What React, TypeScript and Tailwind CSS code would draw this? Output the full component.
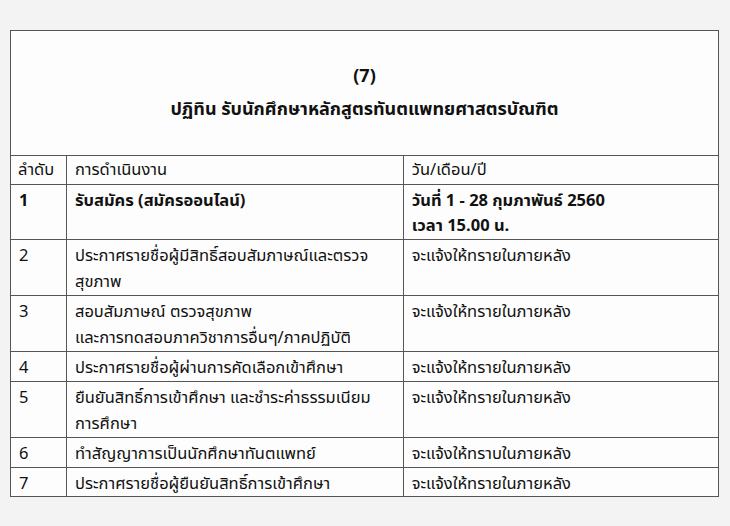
const rows: { no: string; task: string[]; date: string[]; bold?: boolean }[] = [
  { no: "1", task: ["รับสมัคร (สมัครออนไลน์)"], date: ["วันที่ 1 - 28 กุมภาพันธ์ 2560", "เวลา 15.00 น."], bold: true },
  { no: "2", task: ["ประกาศรายชื่อผู้มีสิทธิ์สอบสัมภาษณ์และตรวจ", "สุขภาพ"], date: ["จะแจ้งให้ทรายในภายหลัง"] },
  { no: "3", task: ["สอบสัมภาษณ์ ตรวจสุขภาพ", "และการทดสอบภาควิชาการอื่นๆ/ภาคปฏิบัติ"], date: ["จะแจ้งให้ทรายในภายหลัง"] },
  { no: "4", task: ["ประกาศรายชื่อผู้ผ่านการคัดเลือกเข้าศึกษา"], date: ["จะแจ้งให้ทรายในภายหลัง"] },
  { no: "5", task: ["ยืนยันสิทธิ์การเข้าศึกษา และชำระค่าธรรมเนียม", "การศึกษา"], date: ["จะแจ้งให้ทรายในภายหลัง"] },
  { no: "6", task: ["ทำสัญญาการเป็นนักศึกษาทันตแพทย์"], date: ["จะแจ้งให้ทราบในภายหลัง"] },
  { no: "7", task: ["ประกาศรายชื่อผู้ยืนยันสิทธิ์การเข้าศึกษา"], date: ["จะแจ้งให้ทรายในภายหลัง"] },
];

const font = {
  fontFamily: '"Noto Sans Thai", "Noto Sans", "DejaVu Sans", sans-serif',
};

const cell = "border border-[#555] align-top pt-[3px]";
const head = "border border-[#555] align-top leading-[27.5px]";

export default function App() {
  return (
    <div className="min-h-[526px] bg-[#f3f3f3] pt-[30px] pl-[10px] pr-[11px]" style={font}>
      <table className="w-[709px] border-collapse bg-[#fdfdfd] text-[16.5px] leading-[25.9px] text-[#111]">
        <colgroup>
          <col className="w-[56px]" />
          <col className="w-[337px]" />
          <col className="w-[316px]" />
        </colgroup>
        <tbody>
          <tr>
            <td
              colSpan={3}
              className="h-[125px] border border-[#555] text-center align-middle text-[18px] font-bold leading-[33px]"
            >
              (7)
              <br />
              ปฏิทิน รับนักศึกษาหลักสูตรทันตแพทยศาสตรบัณฑิต
            </td>
          </tr>
          <tr>
            <td className={`${head} px-[7px]`}>ลำดับ</td>
            <td className={`${head} px-[8px]`}>การดำเนินงาน</td>
            <td className={`${head} px-[8px]`}>วัน/เดือน/ปี</td>
          </tr>
          {rows.map((r) => (
            <tr key={r.no} className={r.bold ? "font-bold" : ""}>
              <td className={`${cell} px-[8px]`}>{r.no}</td>
              <td className={`${cell} whitespace-nowrap px-[8px]`}>
                {r.task.map((t, i) => (
                  <div key={i}>{t}</div>
                ))}
              </td>
              <td className={`${cell} whitespace-nowrap px-[8px]`}>
                {r.date.map((t, i) => (
                  <div key={i}>{t}</div>
                ))}
              </td>
            </tr>
          ))}
        </tbody>
      </table>
    </div>
  );
}
